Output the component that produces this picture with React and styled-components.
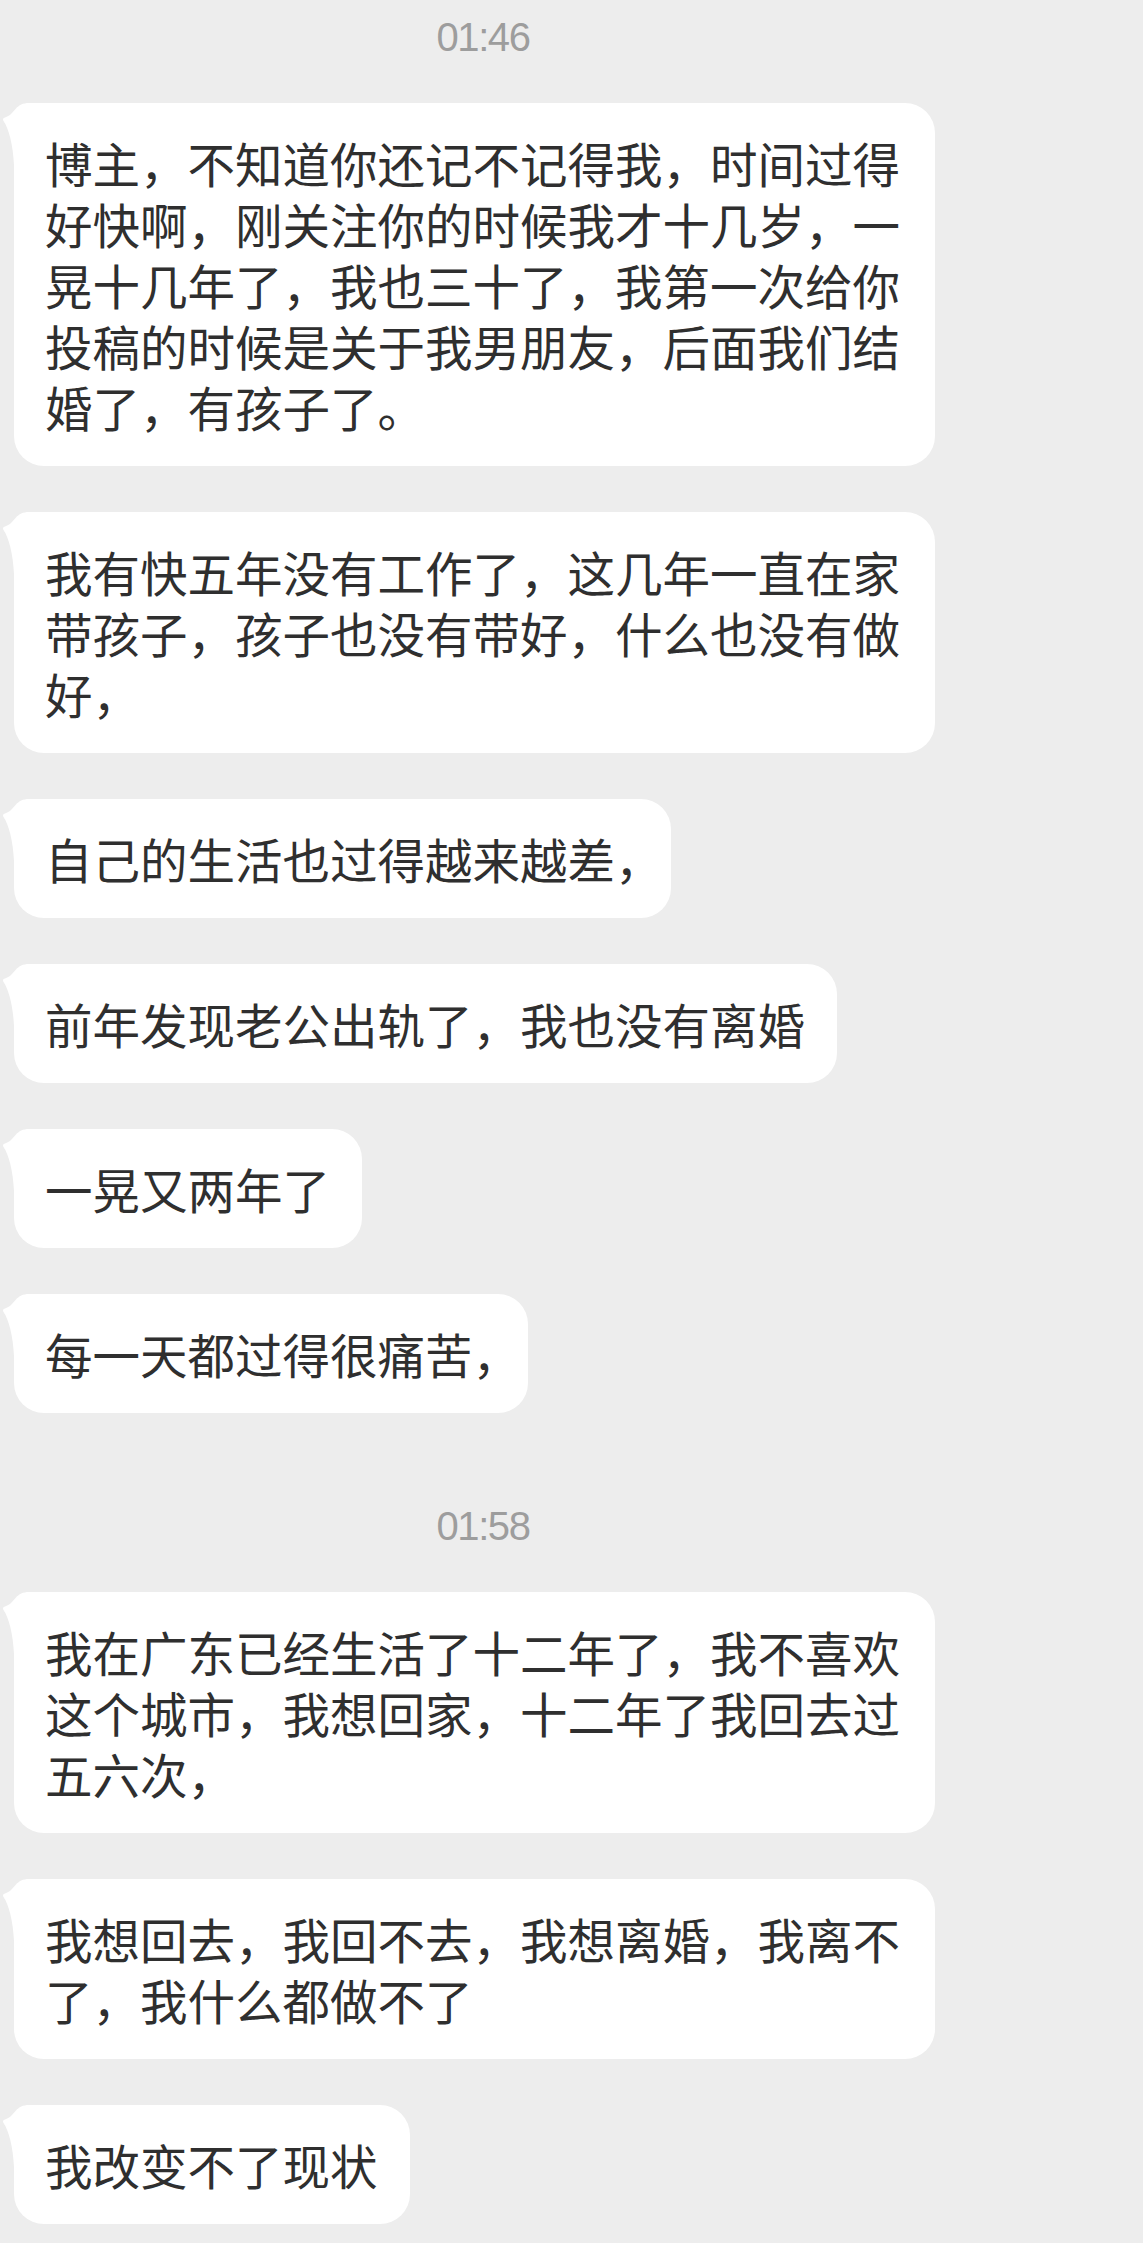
import React from 'react';
import styled, { createGlobalStyle } from 'styled-components';

const GlobalStyle = createGlobalStyle`
  html, body {
    margin: 0;
    padding: 0;
    background: #ededed;
  }
`;

const Page = styled.div`
  min-height: 2243px;
  padding: 17px 0 0 14px;
  box-sizing: border-box;
  background: #ededed;
  font-family: 'Noto Sans CJK SC', 'Noto Sans', sans-serif;
`;

const Thread = styled.div`
  display: flex;
  flex-direction: column;
  align-items: flex-start;
  gap: 46px;
`;

const Time = styled.div`
  width: 938px;
  height: 40px;
  margin-top: ${(p) => (p.$spaced ? '47px' : '0')};
  text-align: center;
  font-family: 'Liberation Sans', Arial, sans-serif;
  font-size: 40px;
  line-height: 40px;
  letter-spacing: -1.4px;
  color: #9d9d9d;
`;

const Bubble = styled.div`
  position: relative;
  max-width: 921px;
  box-sizing: border-box;
  padding: 29px 32px 29px 31px;
  background: #fff;
  border-radius: 30px;
  font-size: 47.5px;
  line-height: 61px;
  color: #2f2f2f;
  word-break: break-all;
`;

const Tail = styled.svg`
  position: absolute;
  left: -12px;
  top: 0;
  width: 44px;
  height: 64px;
`;

const Keep = styled.span`
  white-space: nowrap;
`;

// trailing full-width comma sits half-width at the end of a line
const Trim = styled.span`
  display: inline-block;
  width: 0.5em;
`;

const Message = ({ text }) => {
  const trailing = text.endsWith('，');
  return (
    <Bubble>
      <Tail viewBox="0 0 44 64">
        <path
          d="M12 62 C11 42 7 26 1.5 18 Q0 15 3 14.5 C8 13 10 10 13.5 6 C17 2 21 0 27 0 L44 0 L44 64 Z"
          fill="#fff"
        />
      </Tail>
      {trailing ? (
        <>
          {text.slice(0, -2)}
          <Keep>
            {text.slice(-2, -1)}
            <Trim>，</Trim>
          </Keep>
        </>
      ) : (
        text
      )}
    </Bubble>
  );
};

const firstBatch = [
  '博主，不知道你还记不记得我，时间过得好快啊，刚关注你的时候我才十几岁，一晃十几年了，我也三十了，我第一次给你投稿的时候是关于我男朋友，后面我们结婚了，有孩子了。',
  '我有快五年没有工作了，这几年一直在家带孩子，孩子也没有带好，什么也没有做好，',
  '自己的生活也过得越来越差，',
  '前年发现老公出轨了，我也没有离婚',
  '一晃又两年了',
  '每一天都过得很痛苦，',
];

const secondBatch = [
  '我在广东已经生活了十二年了，我不喜欢这个城市，我想回家，十二年了我回去过五六次，',
  '我想回去，我回不去，我想离婚，我离不了，我什么都做不了',
  '我改变不了现状',
];

const App = () => {
  return (
    <Page>
      <GlobalStyle />
      <Thread>
        <Time>01:46</Time>
        {firstBatch.map((t, i) => (
          <Message key={'a' + i} text={t} />
        ))}
        <Time $spaced>01:58</Time>
        {secondBatch.map((t, i) => (
          <Message key={'b' + i} text={t} />
        ))}
      </Thread>
    </Page>
  );
};

export default App;
